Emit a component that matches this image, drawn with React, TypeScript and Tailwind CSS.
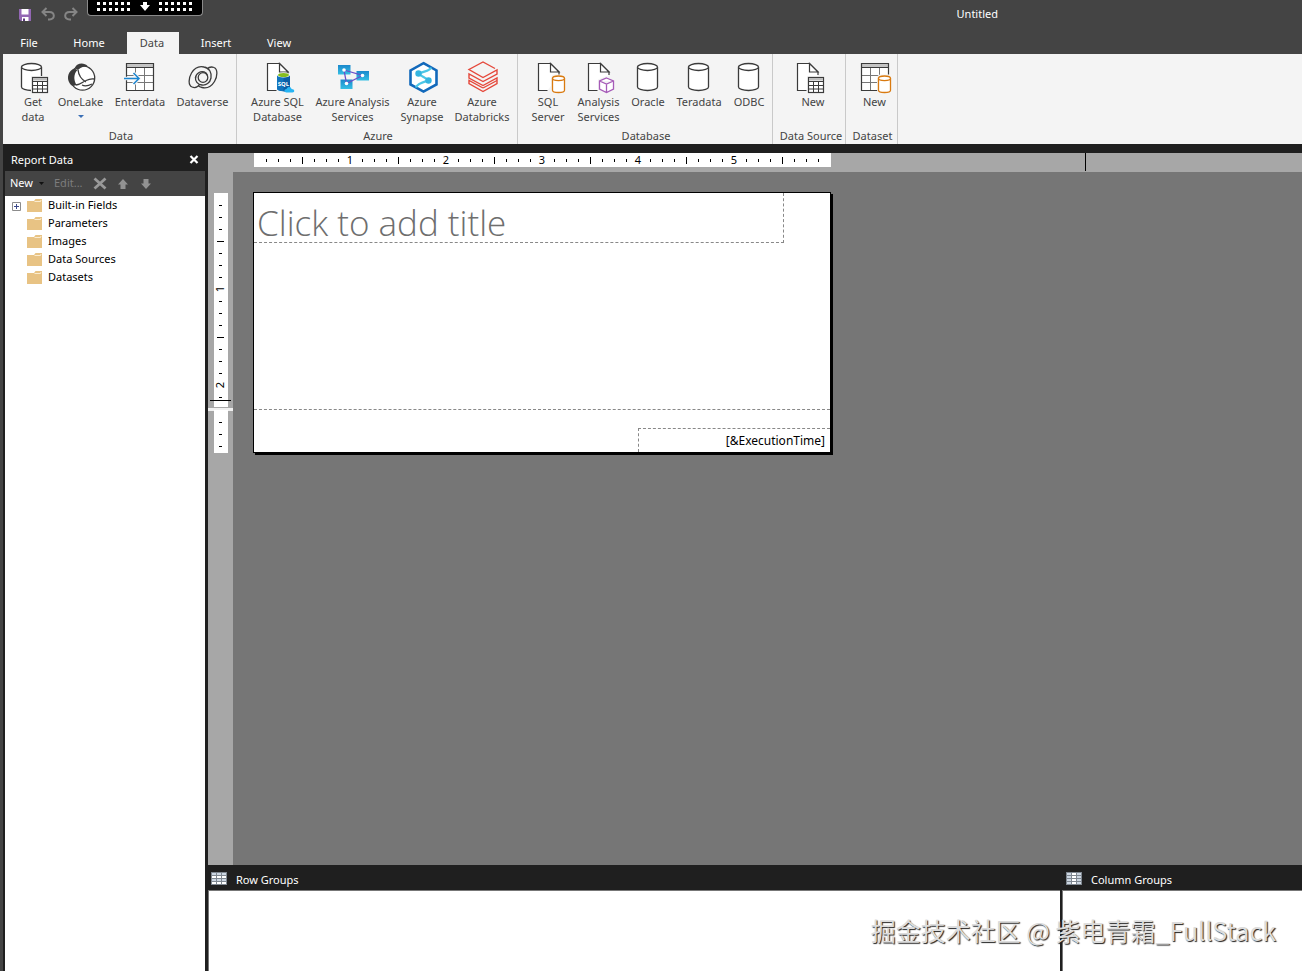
import type { ReactNode } from 'react';
import { clsx } from 'clsx';

const INK = '#3b3b3b';

/* ---------- icon parts, all drawn on a 32px grid ---------- */

const Icon = ({ children }: { children: ReactNode }) => (
  <svg viewBox="0 0 32 32" fill="none" className="w-8 h-8 shrink-0 overflow-visible" aria-hidden="true">
    {children}
  </svg>
);

const Cylinder = ({ x, y, w, h, ry, color = INK }: { x: number; y: number; w: number; h: number; ry: number; color?: string }) => (
  <g stroke={color} strokeWidth="1.3" fill="#fff">
    <path d={`M${x} ${y + ry}V${y + h - ry}A${w / 2} ${ry} 0 0 0 ${x + w} ${y + h - ry}V${y + ry}`} />
    <ellipse cx={x + w / 2} cy={y + ry} rx={w / 2} ry={ry} />
  </g>
);

const Page = ({ x }: { x: number }) => (
  <g stroke={INK} strokeWidth="1.2" fill="#fff">
    <path d={`M${x + 9} 29.5H${x}V2.5H${x + 12}L${x + 20.5} 11V14`} />
    <path d={`M${x + 12} 2.5V11H${x + 20.5}Z`} />
  </g>
);

const SmallTable = ({ x, y }: { x: number; y: number }) => (
  <g>
    <rect x={x - 1.5} y={y - 1.5} width="18" height="18" fill="#f4f4f4" />
    <rect x={x} y={y} width="15" height="15" fill="#fff" stroke={INK} strokeWidth="1.2" />
    <rect x={x + 0.5} y={y + 0.5} width="14" height="2.5" fill="#bdbdbd" />
    <path
      d={`M${x} ${y + 4}h15M${x} ${y + 8}h15M${x} ${y + 11.5}h15M${x + 5} ${y + 4}v11M${x + 10} ${y + 4}v11`}
      stroke={INK}
    />
  </g>
);

const BigTable = ({ x }: { x: number }) => (
  <g>
    <rect x={x} y="2.5" width="27" height="27" fill="#fff" />
    <rect x={x} y="2.5" width="27" height="4" fill="#c4c4c4" />
    <path d={`M${x} 14.5h27M${x} 21.5h27M${x + 9} 6.5v23M${x + 18} 6.5v23`} stroke="#777" />
    <path d={`M${x} 6.5h27M${x} 2.5h27v27h-27z`} stroke={INK} strokeWidth="1.2" />
  </g>
);

const GetDataIcon = () => (
  <Icon>
    <Cylinder x={4.5} y={2.5} w={20} h={27} ry={3.5} />
    <SmallTable x={15.5} y={16.5} />
  </Icon>
);

const OneLakeIcon = () => (
  <Icon>
    <circle cx="17.5" cy="17" r="12.2" fill="#fff" stroke={INK} strokeWidth="1.3" />
    <path d="M10 6.5C12 2 19 1 23 5.500C19 5.500 16 6 13.500 8.500C12 9 11 8 10 6.500Z" fill={INK} />
    <path d="M9.500 7.500C3 9.500 1.500 17 4.500 22C6 25 9 25.500 11.500 24C8.500 19 8.500 13 12.500 9Z" fill={INK} />
    <path d="M13 8.500C13.500 14 16.500 18.500 21 21M11 24C16 23.500 18 20.500 21 19.500C24 18 27 17.500 29.500 18M17 24C20 25.500 24 24.500 27 23" stroke={INK} strokeWidth="1.300" />
  </Icon>
);

const EnterDataIcon = () => (
  <Icon>
    <BigTable x={2.5} />
    <path d="M0 17.500H14.500M9.500 12L15 17.500L9.500 23" stroke="#f4f4f4" strokeWidth="3.500" />
    <path d="M0 17.500H14.500M9.500 12L15 17.500L9.500 23" stroke="#1c86d1" strokeWidth="1.500" />
  </Icon>
);

const DataverseIcon = () => (
  <Icon>
    <g stroke={INK} strokeWidth="1.300">
      <circle cx="16" cy="16.500" r="4.800" />
      <path d="M5 26C1 24.500 1.500 17 4.500 12C7.500 7 12.500 5 17 6C22.500 7 25 12 24 17C23 22 19 24.500 15 24C10.500 23.500 8 20 8.500 16" />
      <path d="M5 26C7.500 27 10.500 26.500 12.500 23.500" />
      <path d="M27 6.500C31 8 30.500 15.500 27.500 20.500C24.500 25.500 19.500 27.500 15 26.500C13.500 26.200 12 25.500 11 24.500" />
      <path d="M27 6.500C24.500 5.500 22 6 20 8M20.500 14.500C19.500 11 15.500 9.500 12 11.500C9.500 13 8.500 14.500 8.500 17" />
    </g>
  </Icon>
);

const AzureSqlIcon = () => (
  <Icon>
    <Page x={5.5} />
    <path d="M15 14V28C15 31 28 31 28 28V14Z" fill="#1174bd" />
    <path d="M21.500 14H28V28C28 29.500 25 30.500 21.500 30.500Z" fill="#0b5ea5" />
    <ellipse cx="21.500" cy="14" rx="6.500" ry="2.500" fill="#fff" />
    <ellipse cx="21.500" cy="14" rx="5.500" ry="2" fill="#86bd1f" />
    <text x="21.500" y="24.500" textAnchor="middle" fontSize="6" fontWeight="bold" fill="#fff">SQL</text>
    <path d="M24.500 31.500C21.500 31 22 28 24.500 28C25.500 25 29.500 25.500 29.500 28C33 28 33 31.500 30.500 31.500Z" fill="#27b4f3" />
  </Icon>
);

const AzureAnalysisIcon = () => (
  <Icon>
    <defs>
      <linearGradient id="node" x1="0" y1="0" x2="0" y2="1">
        <stop offset="0" stopColor="#1b88cc" />
        <stop offset="1" stopColor="#35bfe4" />
      </linearGradient>
    </defs>
    <rect x="1" y="4" width="12.500" height="9.500" fill="url(#node)" />
    <rect x="3.500" y="18.500" width="12" height="9.500" fill="url(#node)" />
    <rect x="19.500" y="10" width="12.500" height="9.500" fill="url(#node)" />
    <path d="M7 9L25.500 14.500L9.500 22.500Z" stroke="#6b50c8" strokeWidth="1.300" />
    <g fill="#fff">
      <circle cx="7" cy="9" r="1.800" />
      <circle cx="25.500" cy="14.500" r="1.800" />
      <circle cx="9.500" cy="22.500" r="1.800" />
    </g>
  </Icon>
);

const SynapseIcon = () => (
  <Icon>
    <path d="M17.500 2.200L30.500 9.400V23.400L17.500 30.600L4.500 23.400V9.400Z" fill="#fff" stroke="#1269bb" strokeWidth="2.600" />
    <path d="M25 6.500C24 10 19 10 13 12.500C15 16 20 16 22 19.500C17 21 11 22.500 10 26.500" stroke="#4cc6e6" strokeWidth="2.400" />
    <circle cx="12.500" cy="12.500" r="3.200" fill="#35b5e0" />
    <circle cx="22.500" cy="19.500" r="3.200" fill="#35b5e0" />
  </Icon>
);

const DatabricksIcon = () => (
  <Icon>
    <path
      d="M29 7.500L17 1L3 8.500L17 16.500L31 9V13L17 20.500L3 13V17L17 24.500L31 17V22.500L17 30.500L3 22.500V19.500L17 27"
      stroke="#e5483b"
      strokeWidth="1.400"
    />
    <path d="M17 27L31 19.500" stroke="#e5483b" strokeWidth="1.400" />
  </Icon>
);

const SqlServerIcon = () => (
  <Icon>
    <Page x={6.5} />
    <rect x="19" y="13.500" width="16" height="19" rx="4" fill="#f4f4f4" />
    <Cylinder x={20.5} y={15} w={12} h={16.5} ry={2.3} color="#d97a10" />
  </Icon>
);

const AnalysisServicesIcon = () => (
  <Icon>
    <Page x={5.5} />
    <path d="M23.500 15L32 18.500V29L23.500 33L15 29V18.500Z" fill="#f4f4f4" />
    <path d="M23.500 17L30.500 20V28L23.500 31.500L16.500 28V20ZM16.500 20L23.500 23L30.500 20M23.500 23V31.500" fill="#fff" stroke="#a65bb8" strokeWidth="1.300" />
  </Icon>
);

const DatabaseIcon = () => (
  <Icon>
    <Cylinder x={5.5} y={2.5} w={20} h={27} ry={3.5} />
  </Icon>
);

const NewSourceIcon = () => (
  <Icon>
    <Page x={0.5} />
    <SmallTable x={11.5} y={16.5} />
  </Icon>
);

const NewDatasetIcon = () => (
  <Icon>
    <BigTable x={2.5} />
    <rect x="18" y="13.500" width="16" height="19" rx="4" fill="#f4f4f4" />
    <Cylinder x={19.5} y={15} w={12} h={16.5} ry={2.3} color="#d97a10" />
  </Icon>
);

const FolderIcon = () => (
  <svg viewBox="0 0 15 13" className="w-[15px] h-[13px] shrink-0" aria-hidden="true">
    <path d="M0 2H7L8.500 0H15V13H0Z" fill="#e8c384" />
    <path d="M7.500 2.500H13.500L14 1" fill="none" stroke="#fff6e2" strokeWidth="0.800" />
  </svg>
);

const GroupsIcon = ({ column = false }: { column?: boolean }) => (
  <svg viewBox="0 0 16 13" className="w-4 h-[13px] shrink-0" aria-hidden="true">
    <rect width="16" height="13" fill="#7f8790" />
    {[1, 4, 7, 10].map((y, row) =>
      [1, 6, 11].map((x, col) => (
        <rect key={`${x}-${y}`} x={x} y={y} width="4" height="2" fill={(column ? col === 1 : row % 2 === 1) ? '#fff' : '#ccd6e2'} />
      ))
    )}
  </svg>
);

/* ---------- ribbon ---------- */

type Command = { label: string[]; icon: ReactNode; width: string; menu?: boolean };
type Group = { name: string; className: string; commands: Command[] };

const groups: Group[] = [
  {
    name: 'Data',
    className: 'w-[234px] pl-[13px] pr-[6px]',
    commands: [
      { label: ['Get', 'data'], icon: <GetDataIcon />, width: 'w-[34px]' },
      { label: ['OneLake'], icon: <OneLakeIcon />, width: 'w-[61px]', menu: true },
      { label: ['Enterdata'], icon: <EnterDataIcon />, width: 'w-[58px]' },
      { label: ['Dataverse'], icon: <DataverseIcon />, width: 'w-[67px]' },
    ],
  },
  {
    name: 'Azure',
    className: 'w-[281px] pl-[6px]',
    commands: [
      { label: ['Azure SQL', 'Database'], icon: <AzureSqlIcon />, width: 'w-[69px]' },
      { label: ['Azure Analysis', 'Services'], icon: <AzureAnalysisIcon />, width: 'w-[81px]' },
      { label: ['Azure', 'Synapse'], icon: <SynapseIcon />, width: 'w-[58px]' },
      { label: ['Azure', 'Databricks'], icon: <DatabricksIcon />, width: 'w-[62px]' },
    ],
  },
  {
    name: 'Database',
    className: 'w-[255px] pl-[6px]',
    commands: [
      { label: ['SQL', 'Server'], icon: <SqlServerIcon />, width: 'w-[48px]' },
      { label: ['Analysis', 'Services'], icon: <AnalysisServicesIcon />, width: 'w-[53px]' },
      { label: ['Oracle'], icon: <DatabaseIcon />, width: 'w-[46px]' },
      { label: ['Teradata'], icon: <DatabaseIcon />, width: 'w-[56px]' },
      { label: ['ODBC'], icon: <DatabaseIcon />, width: 'w-[44px]' },
    ],
  },
  {
    name: 'Data Source',
    className: 'w-[73px] pl-[8px]',
    commands: [{ label: ['New'], icon: <NewSourceIcon />, width: 'w-[64px]' }],
  },
  {
    name: 'Dataset',
    className: 'w-[52px] pl-[6px]',
    commands: [{ label: ['New'], icon: <NewDatasetIcon />, width: 'w-[45px]' }],
  },
];

const RibbonGroup = ({ group }: { group: Group }) => (
  <section className={clsx('flex flex-col shrink-0 border-r border-[#c9c9c9]', group.className)}>
    <div className="flex grow">
      {group.commands.map((cmd) => (
        <button key={cmd.label.join(' ')} className={clsx('flex flex-col items-center shrink-0 pt-[7px] whitespace-nowrap', cmd.width)}>
          {cmd.icon}
          <span className="flex flex-col pt-px leading-[15px]">
            {cmd.label.map((line) => (
              <span key={line}>{line}</span>
            ))}
          </span>
          {cmd.menu && (
            <svg viewBox="0 0 6 3" className="w-[6px] h-[3px] mt-[6px]" aria-hidden="true">
              <path d="M0 0H6L3 3Z" fill="#3a6fb5" />
            </svg>
          )}
        </button>
      ))}
    </div>
    <h2 className="text-center whitespace-nowrap leading-[15px] h-4 -ml-1">{group.name}</h2>
  </section>
);

const TitleBar = () => (
  <header className="flex items-start h-8 shrink-0">
    <div className="flex items-center gap-[9px] pl-[18px] pt-[7px]">
      <button aria-label="Save">
        <svg viewBox="0 0 14 14" className="w-[14px] h-[14px]">
          <path d="M1 2H13V14H3L1 12Z" fill="#9367b4" />
          <path d="M3.500 2H10.500V7.500H3.500ZM4 10H10.500V14H4Z" fill="#fff" />
          <path d="M5 11.500H7V14H5Z" fill="#5a3c78" />
        </svg>
      </button>
      <button aria-label="Undo">
        <svg viewBox="0 0 14 14" fill="none" stroke="#858585" strokeWidth="2" className="w-[14px] h-[14px]">
          <path d="M5.500 1L1.500 5L5.500 9M1.500 5H8.500C14 5 14.500 12.500 8.500 12.500H7" />
        </svg>
      </button>
      <button aria-label="Redo">
        <svg viewBox="0 0 14 14" fill="none" stroke="#858585" strokeWidth="2" className="w-[14px] h-[14px]">
          <path d="M8.500 1L12.500 5L8.500 9M12.500 5H5.500C0 5 -0.500 12.500 5.500 12.500H7" />
        </svg>
      </button>
    </div>
    <div className="ml-[9px] w-[116px] h-4 bg-black border border-t-0 border-[#8a8a8a] rounded-b flex justify-center">
      <svg viewBox="0 0 96 12" className="w-24 h-3" aria-hidden="true">
        {[0, 62].map((start) =>
          [0, 1, 2, 3, 4, 5].map((n) => (
            <path key={`${start}-${n}`} d={`M${start + n * 6} 2h3v3h-3zM${start + n * 6} 8h3v3h-3z`} fill="#fff" />
          ))
        )}
        <path d="M46 2H50V5H53L48 11L43 5H46Z" fill="#fff" />
      </svg>
    </div>
    <h1 className="ml-auto mr-[304px] pt-[6px] leading-4">Untitled</h1>
  </header>
);

const tabs = [
  { name: 'File', width: 'w-[52px]' },
  { name: 'Home', width: 'w-[66px] ml-px mr-[5px]' },
  { name: 'Data', width: 'w-[52px] pr-[2px] bg-[#f4f4f4] text-[#444]' },
  { name: 'Insert', width: 'w-[74px]' },
  { name: 'View', width: 'w-[52px]' },
];

const TabStrip = () => (
  <nav className="flex h-[22px] shrink-0 pl-[3px]">
    {tabs.map((tab) => (
      <button key={tab.name} className={clsx('text-center leading-[22px]', tab.width)}>
        {tab.name}
      </button>
    ))}
  </nav>
);

/* ---------- report data panel ---------- */

const treeItems = ['Built-in Fields', 'Parameters', 'Images', 'Data Sources', 'Datasets'];

const ReportDataPanel = () => (
  <aside className="flex flex-col w-[200px] shrink-0">
    <div className="flex items-center justify-between h-[22px] px-[6px] mt-[4px]">
      <h2>Report Data</h2>
      <button aria-label="Close">
        <svg viewBox="0 0 10 10" className="w-[10px] h-[10px]" stroke="#fff" strokeWidth="2.200">
          <path d="M1.500 1L8.500 8M8.500 1L1.500 8" />
        </svg>
      </button>
    </div>
    <div className="flex items-center h-[25px] bg-[#444] pl-[5px] text-[#7d7d7d]">
      <button className="flex items-center gap-[6px] text-white">
        New
        <svg viewBox="0 0 5 3" className="w-[5px] h-[3px]" aria-hidden="true">
          <path d="M0 0H5L2.500 3Z" fill="#111" />
        </svg>
      </button>
      <button className="ml-[10px]">Edit...</button>
      <button aria-label="Delete" className="ml-[10px]">
        <svg viewBox="0 0 14 14" className="w-[14px] h-[14px]" stroke="#999" strokeWidth="2.800">
          <path d="M1.500 1.500L12.500 11.500M12.500 1.500L1.500 11.500" />
        </svg>
      </button>
      <button aria-label="Move up" className="ml-[11px]">
        <svg viewBox="0 0 10 10" className="w-[10px] h-[10px]">
          <path d="M5 0L10 5.500H7.500V10H2.500V5.500H0Z" fill="#929292" />
        </svg>
      </button>
      <button aria-label="Move down" className="ml-[13px]">
        <svg viewBox="0 0 10 10" className="w-[10px] h-[10px]">
          <path d="M5 10L0 4.500H2.500V0H7.500V4.500H10Z" fill="#929292" />
        </svg>
      </button>
    </div>
    <ul className="grow bg-white text-black">
      {treeItems.map((item, i) => (
        <li key={item} className="flex items-center h-[18px] pl-[7px]">
          <span className="w-[15px]">
            {i === 0 && (
              <button aria-label="Expand Built-in Fields" className="block mt-[2px]">
                <svg viewBox="0 0 9 9" className="w-[9px] h-[9px]" fill="none">
                  <path d="M0.500 0.500H8.500V8.500H0.500Z" stroke="#8c8c8c" />
                  <path d="M2 4.500H7M4.500 2V7" stroke="#3d4a8a" />
                </svg>
              </button>
            )}
          </span>
          <FolderIcon />
          <span className="ml-[6px]">{item}</span>
        </li>
      ))}
    </ul>
  </aside>
);

/* ---------- design surface ---------- */

const Ruler = ({ count, vertical = false }: { count: number; vertical?: boolean }) => (
  <div className={clsx('flex bg-white text-black text-[11px]', vertical ? 'flex-col w-[14px] pt-[6px]' : 'h-[14px] w-[577px] pl-[6px]')}>
    {Array.from({ length: count }, (_, i) => i + 1).map((n) => (
      <span key={n} className="flex items-center justify-center w-3 h-3 shrink-0 self-center">
        {n % 8 === 0 ? (
          <span className={clsx('leading-3', vertical && '-rotate-90')}>{n / 8}</span>
        ) : (
          <span
            className={clsx(
              'bg-black',
              vertical ? 'h-px' : 'w-px',
              n % 4 === 0 ? (vertical ? 'w-[7px]' : 'h-[7px]') : vertical ? 'w-[3px]' : 'h-[3px]'
            )}
          />
        )}
      </span>
    ))}
  </div>
);

const DesignSurface = () => (
  <main className="flex flex-col grow min-h-0 bg-[#767676]">
    <div className="flex h-[19px] shrink-0 bg-[#a7a7a7] pl-[46px]">
      <Ruler count={47} />
      <div className="w-px h-[18px] bg-black ml-[254px]" />
    </div>
    <div className="flex grow min-h-0">
      <div className="w-[25px] shrink-0 bg-[#a7a7a7] pt-[21px] flex flex-col items-center">
        <div className="h-[214px] bg-white">
          <Ruler count={17} vertical />
        </div>
        <div className="w-[21px] h-px bg-black -mt-[7px]" />
        <div className="w-full h-[3px] bg-[#f0f0f0] mt-[7px]" />
        <div className="h-[43px] bg-white -mt-px">
          <Ruler count={3} vertical />
        </div>
      </div>
      <div className="pl-5 pt-5">
        <div className="w-[578px] h-[261px] border border-black bg-white shadow-[2px_2px_0_0_#000] flex flex-col">
          <section className="h-[217px] border-b border-dashed border-[#888]">
            <div className="w-[530px] h-[50px] border-b border-r border-dashed border-[#888] pl-[3px] pt-[11px] whitespace-nowrap text-[#6e6e6e] font-['Open_Sans','Noto_Sans',sans-serif] font-light text-[35px] leading-[38px]">
              Click to add title
            </div>
          </section>
          <footer className="flex grow items-end justify-end">
            <div className="w-[192px] h-6 border-t border-l border-dashed border-[#888] pr-[5px] text-right text-black text-[12px] leading-[23px]">
              [&amp;ExecutionTime]
            </div>
          </footer>
        </div>
      </div>
    </div>
  </main>
);

const GroupingPane = () => (
  <div className="flex h-[106px] shrink-0 gap-[2px]">
    <section className="flex flex-col grow">
      <div className="flex items-center h-[26px] pl-[3px] pt-[2px] gap-[9px] border-b border-[#777]">
        <GroupsIcon />
        <h2 className="pt-[4px]">Row Groups</h2>
      </div>
      <div className="grow bg-white border-l border-[#777]" />
    </section>
    <section className="flex flex-col w-[240px] shrink-0">
      <div className="flex items-center h-[26px] pl-[4px] pt-[2px] gap-[9px] border-b border-[#777]">
        <GroupsIcon column />
        <h2 className="pt-[4px]">Column Groups</h2>
      </div>
      <div className="grow bg-white border-l border-[#777]" />
    </section>
  </div>
);

export default function App() {
  return (
    <div className="relative flex flex-col h-screen overflow-hidden bg-[#444] text-white text-[11px] font-['Noto_Sans','Open_Sans',sans-serif]">
      <TitleBar />
      <TabStrip />
      <div className="flex h-[90px] shrink-0 ml-[3px] bg-[#f4f4f4] text-[#444]">
        {groups.map((group) => (
          <RibbonGroup key={group.name} group={group} />
        ))}
      </div>
      <div className="flex grow min-h-0 ml-[3px] pl-[2px] pt-px bg-[#1f1f1f]">
        <ReportDataPanel />
        <div className="flex flex-col grow min-w-0 ml-[3px] pt-[8px]">
          <DesignSurface />
          <GroupingPane />
        </div>
      </div>
      <p className="absolute right-[26px] bottom-[23px] text-[25px] leading-9 whitespace-nowrap text-[#dcdcdc] [text-shadow:1px_1px_1px_#222] font-['Noto_Sans_CJK_SC',sans-serif]">
        掘金技术社区 @ 紫电青霜_FullStack
      </p>
    </div>
  );
}
